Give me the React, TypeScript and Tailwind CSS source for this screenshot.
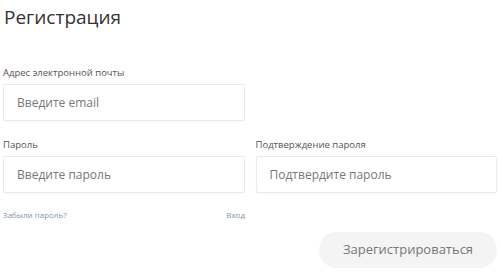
import React from 'react';

const Field: React.FC<{ label: string; placeholder: string; type?: string }> = ({ label, placeholder, type = 'text' }) => (
    <div className="flex flex-col">
        <label className="text-[9.5px] leading-[14px] text-[#555] mb-[4px]">{label}</label>
        <input
            type={type}
            placeholder={placeholder}
            className="h-[37px] w-full border border-[#ebebeb] rounded-[2px] px-[13px] text-[12px] text-[#333] placeholder:text-[#777] bg-white shadow-[0_1px_2px_rgba(0,0,0,0.03)] outline-none"
        />
    </div>
);

export default function App() {
    return (
        <div className="w-[500px] h-[273px] bg-white pl-[3px] pr-[3px] pt-[3px]" style={{ fontFamily: '"Open Sans", "Noto Sans", sans-serif' }}>
            <h1 className="text-[19px] leading-[28px] text-[#333] font-normal pl-[1px]">Регистрация</h1>
            <div className="mt-[35px] grid grid-cols-2 gap-x-[11px] gap-y-[17px] w-[494px]">
                <Field label="Адрес электронной почты" placeholder="Введите email" />
                <div />
                <Field label="Пароль" placeholder="Введите пароль" type="password" />
                <Field label="Подтверждение пароля" placeholder="Подтвердите пароль" type="password" />
            </div>
            <div className="flex w-[242px] justify-between mt-[17px] text-[8px] leading-[10px] text-[#8194b3]">
                <a href="#">Забыли пароль?</a>
                <a href="#">Вход</a>
            </div>
            <div className="flex justify-end w-[494px] mt-[12px]">
                <button className="h-[36px] w-[178px] rounded-full bg-[#f4f4f4] text-[13px] text-[#777]">
                    Зарегистрироваться
                </button>
            </div>
        </div>
    );
}
